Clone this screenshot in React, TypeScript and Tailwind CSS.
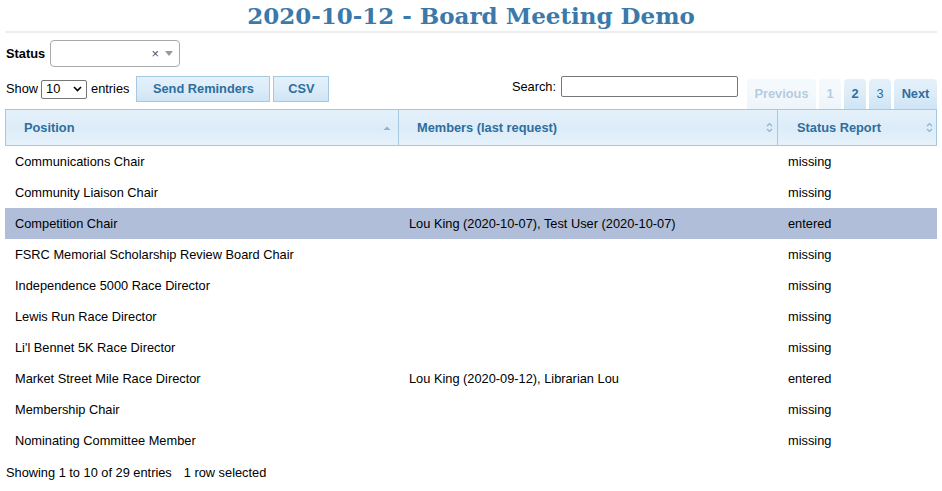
import React from "react";

const rows = [
  { position: "Communications Chair", members: "", status: "missing" },
  { position: "Community Liaison Chair", members: "", status: "missing" },
  { position: "Competition Chair", members: "Lou King (2020-10-07), Test User (2020-10-07)", status: "entered", selected: true },
  { position: "FSRC Memorial Scholarship Review Board Chair", members: "", status: "missing" },
  { position: "Independence 5000 Race Director", members: "", status: "missing" },
  { position: "Lewis Run Race Director", members: "", status: "missing" },
  { position: "Li'l Bennet 5K Race Director", members: "", status: "missing" },
  { position: "Market Street Mile Race Director", members: "Lou King (2020-09-12), Librarian Lou", status: "entered" },
  { position: "Membership Chair", members: "", status: "missing" },
  { position: "Nominating Committee Member", members: "", status: "missing" },
];

function SortBoth() {
  return (
    <svg width="7" height="11" viewBox="0 0 7 11" className="text-[#8fb3cf]">
      <path d="M1 4 L3.5 1.5 L6 4" fill="none" stroke="currentColor" strokeWidth="1.2" />
      <path d="M1 7 L3.5 9.5 L6 7" fill="none" stroke="currentColor" strokeWidth="1.2" />
    </svg>
  );
}

function SortAsc() {
  return (
    <svg width="8" height="6" viewBox="0 0 8 6" className="text-[#8fb3cf]">
      <path d="M0.5 5 L4 1.5 L7.5 5 Z" fill="currentColor" />
    </svg>
  );
}

const btn =
  "border border-[#a6c9e2] bg-gradient-to-b from-[#e4f1fb] via-[#dcecf8] to-[#cfe4f5] font-bold text-[#2e6e9e]";

export default function App() {
  return (
    <div className="w-[942px] h-[491px] overflow-hidden bg-white px-[5px] font-['Liberation_Sans',Arial,sans-serif] text-[12.8px] text-black">
      <h1 className="h-[33px] border-b-2 border-[#eeeeee] pt-[2px] text-center font-['DejaVu_Serif',Georgia,serif] text-[23px] font-bold leading-[28px] text-[#3b79aa]">
        2020-10-12 - Board Meeting Demo
      </h1>

      <div className="mt-[7px] flex h-[27px] items-center gap-[5px] pl-[1px]">
        <span className="font-bold">Status</span>
        <div className="flex h-[27px] w-[130px] items-center justify-end gap-[6px] rounded-[4px] border border-[#aaaaaa] pr-[6px]">
          <span className="text-[13px] leading-none text-[#555]">×</span>
          <svg width="8" height="5" viewBox="0 0 8 5">
            <path d="M0 0 L8 0 L4 5 Z" fill="#999" />
          </svg>
        </div>
      </div>

      <div className="mt-[9px] flex h-[33px] items-start">
        <div className="flex h-[26px] items-center pl-[1px]">
          <span>Show</span>
          <div className="ml-[3px] flex h-[19px] w-[46px] items-center justify-between rounded-[2px] border border-[#767676] px-[4px]">
            <span>10</span>
            <svg width="9" height="6" viewBox="0 0 9 6">
              <path d="M1 1 L4.5 4.5 L8 1" fill="none" stroke="#000" strokeWidth="1.6" />
            </svg>
          </div>
          <span className="ml-[4px]">entries</span>
        </div>
        <div className="ml-[7px] flex gap-[3px]">
          <button className={`${btn} h-[26px] w-[134px]`}>Send Reminders</button>
          <button className={`${btn} h-[26px] w-[56px]`}>CSV</button>
        </div>
        <div className="ml-auto flex h-[21px] items-center">
          <span>Search:</span>
          <div className="ml-[5px] h-[21px] w-[177px] rounded-[2px] border border-[#767676]" />
        </div>
        <div className="ml-[9px] mt-[3px] flex gap-[3px]">
          <span className={`${btn} flex h-[30px] w-[69px] items-center justify-center rounded-t-[4px] border-0 opacity-35`}>Previous</span>
          <span className={`${btn} flex h-[30px] w-[22px] items-center justify-center rounded-t-[4px] border-0 opacity-35`}>1</span>
          <span className={`${btn} flex h-[30px] w-[22px] items-center justify-center rounded-t-[4px] border-0`}>2</span>
          <span className={`${btn} flex h-[30px] w-[22px] items-center justify-center rounded-t-[4px] border-0 font-normal`}>3</span>
          <span className={`${btn} flex h-[30px] w-[43px] items-center justify-center rounded-t-[4px] border-0`}>Next</span>
        </div>
      </div>

      <div className="w-[932px]">
        <div className="flex h-[37px] border border-[#a6c9e2] bg-gradient-to-b from-[#e4f1fb] via-[#dcecf8] to-[#e6f2fb] font-bold text-[#2e6e9e]">
          <div className="flex w-[393px] items-center justify-between border-r border-[#a6c9e2] pl-[18px] pr-[7px]">
            <span>Position</span>
            <SortAsc />
          </div>
          <div className="flex w-[379px] items-center justify-between border-r border-[#a6c9e2] pl-[18px] pr-[4px]">
            <span>Members (last request)</span>
            <SortBoth />
          </div>
          <div className="flex flex-1 items-center justify-between pl-[19px] pr-[3px]">
            <span>Status Report</span>
            <SortBoth />
          </div>
        </div>
        {rows.map((r) => (
          <div
            key={r.position}
            className={`flex h-[31px] items-center ${r.selected ? "bg-[#b0bed9]" : "bg-white"}`}
          >
            <div className="w-[394px] pl-[10px]">{r.position}</div>
            <div className="w-[379px] pl-[10px]">{r.members}</div>
            <div className="flex-1 pl-[10px]">{r.status}</div>
          </div>
        ))}
      </div>

      <div className="mt-[7px] flex gap-[12px] pl-[1px]">
        <span>Showing 1 to 10 of 29 entries</span>
        <span>1 row selected</span>
      </div>
    </div>
  );
}
